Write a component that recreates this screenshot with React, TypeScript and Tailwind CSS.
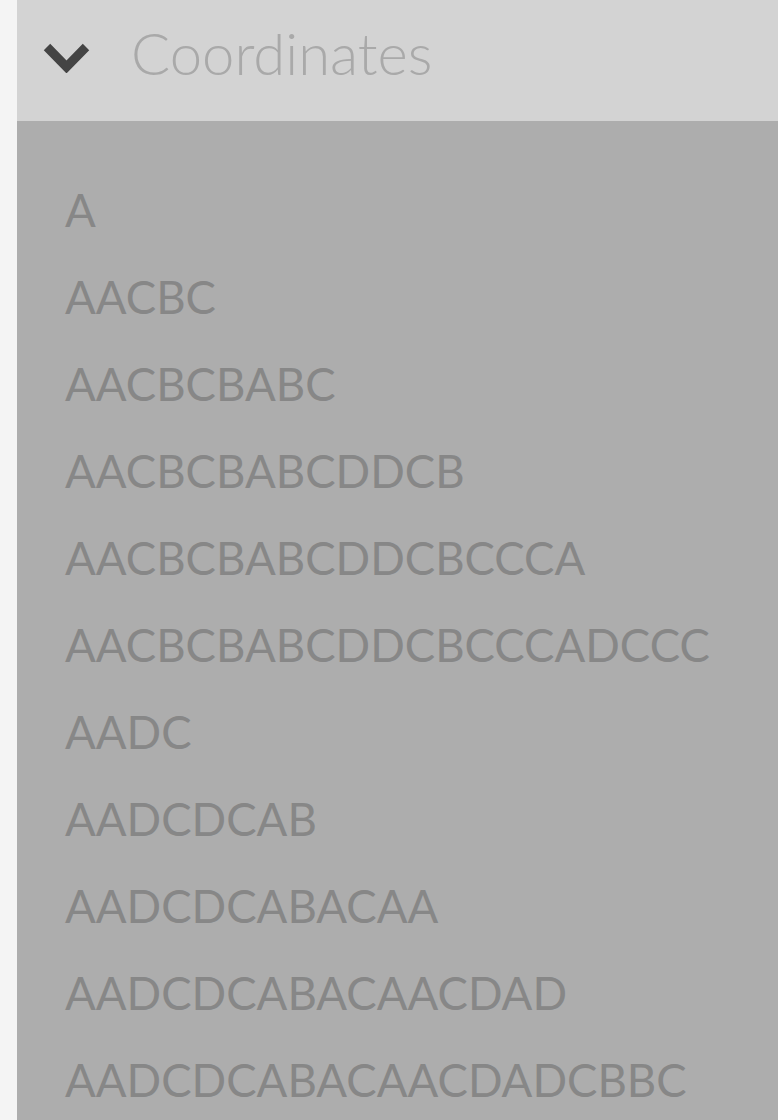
import React from "react";

const items = [
  "A",
  "AACBC",
  "AACBCBABC",
  "AACBCBABCDDCB",
  "AACBCBABCDDCBCCCA",
  "AACBCBABCDDCBCCCADCCC",
  "AADC",
  "AADCDCAB",
  "AADCDCABACAA",
  "AADCDCABACAACDAD",
  "AADCDCABACAACDADCBBC",
];

export default function App() {
  return (
    <div className="flex h-[1120px] w-[778px] overflow-hidden bg-[#f4f4f4] font-['Lato',sans-serif]">
      <div className="w-[17px] shrink-0" />
      <div className="flex flex-1 flex-col">
        <div className="flex h-[121px] shrink-0 items-center bg-[#d3d3d3] pb-[6px] pl-[26px]">
          <svg width="47" height="30" viewBox="0 0 47 30" className="shrink-0">
            <path d="M4 4 L23.5 24 L43 4" fill="none" stroke="#444444" strokeWidth="9" strokeLinejoin="miter" />
          </svg>
          <span className="mb-[10px] ml-[41px] text-[58px] font-light leading-none text-[#a9a9a9]">Coordinates</span>
        </div>
        <div className="flex flex-1 flex-col bg-[#adadad] pl-[48px] pt-[64px]">
          {items.map((t) => (
            <div key={t} className="h-[87px] text-[45.5px] leading-[50px] text-[#878787]">
              {t}
            </div>
          ))}
        </div>
      </div>
    </div>
  );
}
